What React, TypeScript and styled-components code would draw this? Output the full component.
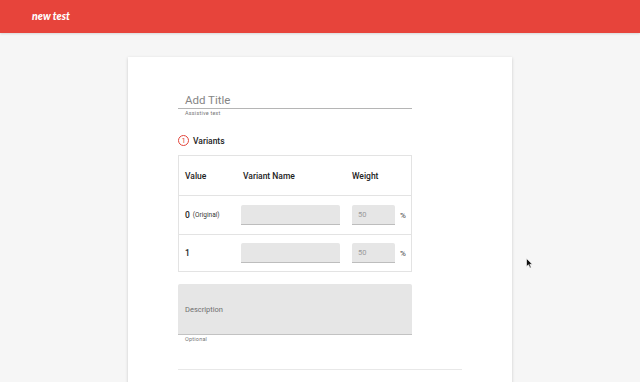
import React from 'react'
import styled, { createGlobalStyle } from 'styled-components'

const GlobalStyle = createGlobalStyle`
  html, body {
    margin: 0;
    padding: 0;
    background: #f6f6f6;
    font-family: Roboto, "Liberation Sans", Arial, sans-serif;
    overflow: hidden;
  }
`

const Page = styled.div`
  position: relative;
  width: 640px;
  height: 382px;
  overflow: hidden;
  background: #f6f6f6;
`

const TopBar = styled.header`
  height: 33px;
  background: #e7443b;
  display: flex;
  align-items: center;
  padding-left: 32px;
  box-shadow: 0 1px 2px rgba(0, 0, 0, 0.12);
`

const Brand = styled.div`
  font-family: Lato, "Open Sans", sans-serif;
  font-style: italic;
  font-weight: 900;
  font-size: 10.5px;
  color: white;
  margin-top: -1px;
`

const Sheet = styled.main`
  width: 384px;
  margin: 24px auto 0;
  min-height: 360px;
  background: #fff;
  box-shadow: 0 1px 3px rgba(0, 0, 0, 0.18);
  padding: 30px 50px 0;
  box-sizing: border-box;
`

const Field = styled.div`
  width: 234px;
`

const TitleInput = styled.div`
  height: 20px;
  border-bottom: 1px solid #b5b5b5;
  padding-left: 7px;
  font-size: 11.5px;
  color: #858585;
  display: flex;
  align-items: flex-end;
  padding-bottom: 1px;
`

const Helper = styled.div`
  font-size: 5.5px;
  color: #777;
  padding-left: 7px;
  margin-top: 1px;
  letter-spacing: 0.2px;
`

const SectionHead = styled.div`
  display: flex;
  align-items: center;
  gap: 4px;
  margin-top: 19px;
  font-size: 8.5px;
  font-weight: 500;
  color: #222;
`

const StepBadge = styled.span`
  width: 9px;
  height: 9px;
  border: 1px solid #e2443b;
  border-radius: 50%;
  color: #e2443b;
  font-size: 7.5px;
  font-weight: 400;
  display: flex;
  align-items: center;
  justify-content: center;
  line-height: 1;
`

const Table = styled.div`
  margin-top: 9px;
  width: 234px;
  border: 1px solid #e3e3e3;
  box-sizing: border-box;
`

const Row = styled.div<{ $h: number; $head?: boolean }>`
  display: grid;
  grid-template-columns: 62px 111px 1fr;
  align-items: center;
  height: ${p => p.$h}px;
  border-top: ${p => (p.$head ? 'none' : '1px solid #e3e3e3')};
  box-sizing: border-box;
  font-size: 8.5px;
  color: #222;
  font-weight: 500;
`

const Cell = styled.div<{ $pad?: number }>`
  padding-left: ${p => p.$pad ?? 0}px;
  display: flex;
  align-items: center;
  gap: 3px;
`

const Small = styled.span`
  font-size: 6.5px;
  font-weight: 400;
  color: #333;
`

const Input = styled.div<{ $w: number }>`
  width: ${p => p.$w}px;
  height: 20px;
  background: #e6e6e6;
  border-bottom: 1px solid #bdbdbd;
  box-sizing: border-box;
  border-radius: 2px 2px 0 0;
  font-size: 7.5px;
  color: #9a9a9a;
  font-weight: 400;
  display: flex;
  align-items: center;
  padding-left: 6px;
`

const Unit = styled.span`
  font-size: 8px;
  color: #444;
  font-weight: 400;
  margin-left: 2px;
`

const DescBox = styled.div`
  margin-top: 12px;
  height: 51px;
  background: #e6e6e6;
  border-bottom: 1px solid #c2c2c2;
  box-sizing: border-box;
  border-radius: 2px 2px 0 0;
  padding-left: 7px;
  font-size: 7.5px;
  font-weight: 400;
  color: #6f6f6f;
  display: flex;
  align-items: center;
`

const Divider = styled.hr`
  border: none;
  border-top: 1px solid #e8e8e8;
  margin: 27px 0 0;
  width: 284px;
`

const Pointer = styled.svg`
  position: absolute;
  left: 526px;
  top: 258px;
`

export default function App() {
  return (
    <Page>
      <GlobalStyle />
      <TopBar>
        <Brand>new test</Brand>
      </TopBar>
      <Sheet>
        <Field>
          <TitleInput>Add Title</TitleInput>
          <Helper>Assistive text</Helper>
        </Field>
        <SectionHead>
          <StepBadge>1</StepBadge>
          Variants
        </SectionHead>
        <Table>
          <Row $h={39} $head>
            <Cell $pad={6}>Value</Cell>
            <Cell $pad={2}>Variant Name</Cell>
            <Cell>Weight</Cell>
          </Row>
          <Row $h={39}>
            <Cell $pad={6}>
              0 <Small>(Original)</Small>
            </Cell>
            <Cell>
              <Input $w={99} />
            </Cell>
            <Cell>
              <Input $w={43}>50</Input>
              <Unit>%</Unit>
            </Cell>
          </Row>
          <Row $h={37}>
            <Cell $pad={6}>1</Cell>
            <Cell>
              <Input $w={99} />
            </Cell>
            <Cell>
              <Input $w={43}>50</Input>
              <Unit>%</Unit>
            </Cell>
          </Row>
        </Table>
        <Field>
          <DescBox>Description</DescBox>
          <Helper>Optional</Helper>
        </Field>
        <Divider />
      </Sheet>
      <Pointer width="7" height="11" viewBox="0 0 7 11">
        <path d="M0.5 0.5 L0.5 8.5 L2.5 6.8 L4 10 L5.2 9.4 L3.8 6.3 L6.3 6.2 Z" fill="#111" stroke="#fff" strokeWidth="0.6" />
      </Pointer>
    </Page>
  )
}
